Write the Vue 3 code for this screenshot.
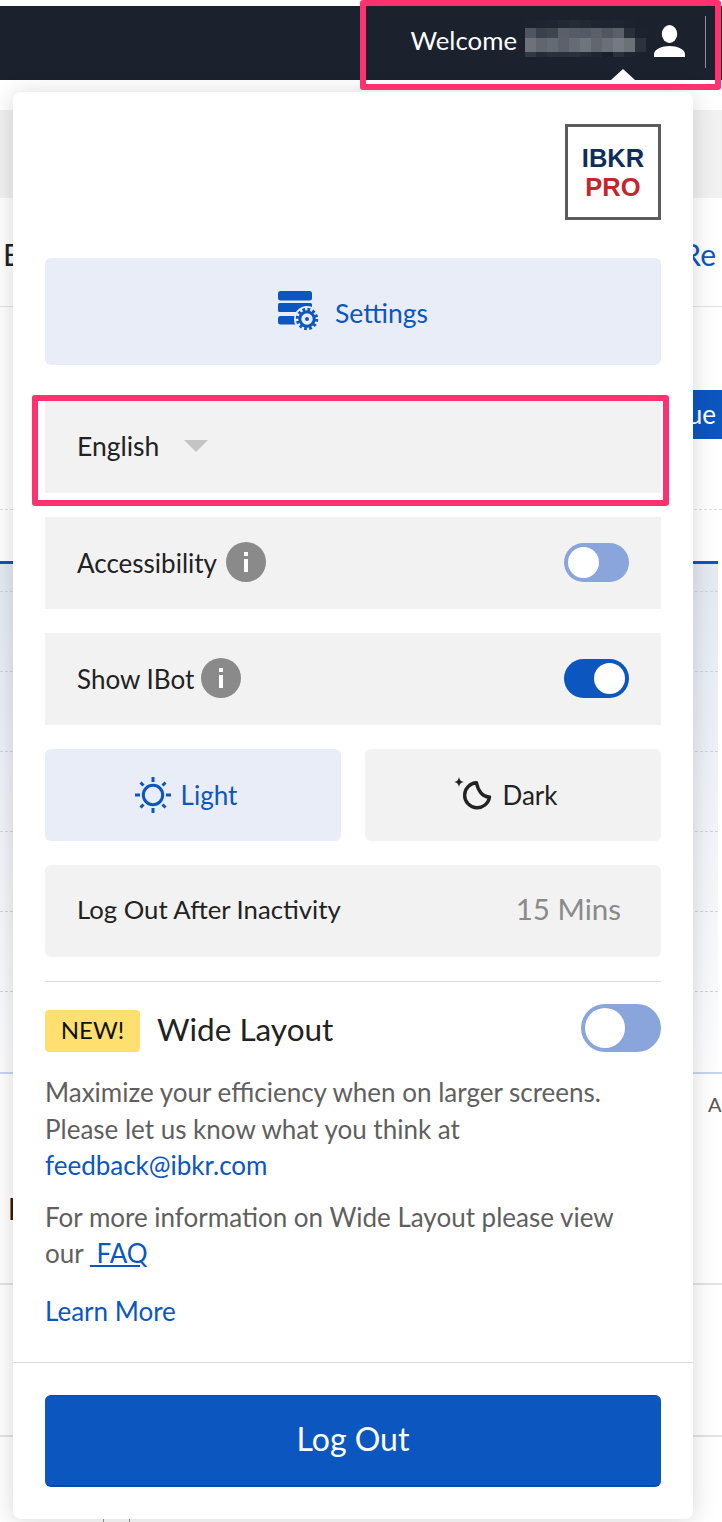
<script setup>
// pixelated name block in the header, one colour per cell
const blurRows = [
  ['#1c232e', '#1e2530', '#20262f', '#232932', '#262c35', '#232932', '#20262f', '#1e2530', '#20262f', '#1c232e', '#1b222d'],
  ['#50565f', '#3b414b', '#3f454e', '#5a5f69', '#565c66', '#545a63', '#5a5f68', '#51565f', '#5a5f69', '#2a303a', '#1c232e'],
  ['#6d727a', '#60656e', '#656a73', '#5c616b', '#666b74', '#70757d', '#62676f', '#6b7078', '#757a82', '#6c7178', '#2d333d'],
  ['#333943', '#272d37', '#2b313b', '#2a303a', '#2c323c', '#262c36', '#1f2631', '#181f2a', '#2b313b', '#1e2530', '#1b222d'],
]
const rowHeights = '8px 10px 14px 5px'
</script>

<template>
  <div class="page">
    <!-- page behind the menu -->
    <header class="topbar">
      <span class="welcome">Welcome</span>
      <div class="blur" :style="{ gridTemplateRows: rowHeights }">
        <template v-for="(row, r) in blurRows" :key="r">
          <i v-for="(c, i) in row" :key="i" :style="{ background: c }"></i>
        </template>
      </div>
      <svg class="person" width="31" height="32" viewBox="0 0 31 32">
        <ellipse cx="15.5" cy="9" rx="7.7" ry="9" fill="#fff" />
        <path d="M0 32v-2.500C0 24 8 21 15.500 21S31 24 31 29.500V32z" fill="#fff" />
      </svg>
      <div class="bar-divider"></div>
      <div class="nub"></div>
    </header>
    <div class="bg-gap"></div>
    <div class="bg-strip"></div>
    <div class="bg-title">
      <span class="bg-e">E</span>
      <span class="bg-re">Re</span>
    </div>
    <div class="bg-action">
      <div class="bg-btn"><span>ue</span></div>
    </div>
    <div class="bg-table">
      <div v-for="n in 7" :key="n" class="bg-cell"></div>
    </div>
    <div class="bg-row">
      <span class="bg-a">A</span>
      <span class="bg-i">I</span>
    </div>
    <div class="bg-row-last"></div>
    <div class="bg-ticks"><i></i><i></i></div>

    <!-- user menu -->
    <div class="menu">
      <div class="logo-wrap">
        <div class="logo">
          <span class="logo-top">IBKR</span>
          <span class="logo-bottom">PRO</span>
        </div>
      </div>

      <div class="settings">
        <svg width="42" height="42" viewBox="0 0 42 42">
          <rect x="0" y="0" width="34" height="9.500" rx="2.500" fill="#0c56bf" />
          <rect x="0" y="12" width="34" height="9" rx="1.500" fill="#0c56bf" />
          <rect x="0" y="25" width="34" height="8.500" rx="2.500" fill="#0c56bf" />
          <circle cx="29" cy="28" r="13" fill="#e9edf8" />
          <circle cx="29" cy="28" r="7.200" fill="none" stroke="#0c56bf" stroke-width="3" />
          <circle cx="29" cy="28" r="9.700" fill="none" stroke="#0c56bf" stroke-width="3" stroke-dasharray="2.700 2.400" />
          <circle cx="29" cy="28" r="2" fill="#0c56bf" />
        </svg>
        <span>Settings</span>
      </div>

      <div class="row language">
        <span>English</span>
        <i class="caret"></i>
      </div>

      <div class="row">
        <span class="label">Accessibility</span>
        <span class="info"><b></b><em></em></span>
        <span class="toggle"><i></i></span>
      </div>

      <div class="row">
        <span class="label">Show IBot</span>
        <span class="info tight"><b></b><em></em></span>
        <span class="toggle on"><i></i></span>
      </div>

      <div class="themes">
        <div class="theme active">
          <svg width="36" height="36" viewBox="0 0 36 36" fill="none" stroke="#0c56bf" stroke-width="3">
            <circle cx="18" cy="18" r="9.700" />
            <path d="M18 0v5M18 31v5M0 18h5M31 18h5M5.500 5.500l3 3M27.500 27.500l3 3M30.500 5.500l-3 3M8.500 27.500l-3 3" />
          </svg>
          <span>Light</span>
        </div>
        <div class="theme">
          <svg width="38" height="36" viewBox="0 0 38 36">
            <path d="M5 0C5.600 3.200 6.800 4.400 10 5 6.800 5.600 5.600 6.800 5 10 4.400 6.800 3.200 5.600 0 5 3.200 4.400 4.400 3.200 5 0z" fill="#222" />
            <path d="M22.500 5.800A12.500 12.500 0 1 0 35.500 20C29 20.500 24 14 22.500 5.800z" fill="none" stroke="#222" stroke-width="3.400" stroke-linejoin="round" />
          </svg>
          <span>Dark</span>
        </div>
      </div>

      <div class="row inactivity">
        <span class="inactivity-label">Log Out After Inactivity</span>
        <span class="mins">15 Mins</span>
      </div>

      <div class="wide">
        <div class="wide-head">
          <span class="badge">NEW!</span>
          <span class="wide-title">Wide Layout</span>
          <span class="toggle big"><i></i></span>
        </div>
        <p class="copy first">
          Maximize your efficiency when on larger screens.<br />
          Please let us know what you think at<br />
          <a>feedback@ibkr.com</a>
        </p>
        <p class="copy second">
          For more information on Wide Layout please view<br />
          our <a class="faq">&nbsp;FAQ</a>
        </p>
        <a class="learn">Learn More</a>
      </div>

      <div class="footer">
        <button class="logout">Log Out</button>
      </div>
    </div>

    <!-- annotation frames -->
    <div class="frame frame-top"></div>
    <div class="frame frame-lang"></div>
  </div>
</template>

<style scoped>
.page {
  position: relative;
  width: 722px;
  height: 1522px;
  overflow: hidden;
  background: #fff;
  font-family: "Lato", "Noto Sans", sans-serif;
  color: #222;
}

/* background */
.topbar {
  position: relative;
  height: 74px;
  margin-top: 6px;
  display: flex;
  align-items: center;
  justify-content: flex-end;
  background: #1b222d;
  color: #fff;
  padding: 0 16px 6px 0;
  box-sizing: border-box;
}
.welcome {
  font-size: 25.8px;
  margin-right: 8px;
}
.blur {
  display: grid;
  grid-template-columns: repeat(11, 11px);
  margin-right: 8px;
  margin-bottom: 3px;
}
.person {
  margin-right: 20px;
  margin-top: 2px;
}
.bar-divider {
  width: 1px;
  height: 52px;
  margin-top: 4px;
  background: #8a8f96;
}
.nub {
  position: absolute;
  left: 611px;
  bottom: 0;
  width: 0;
  height: 0;
  border-left: 12px solid transparent;
  border-right: 12px solid transparent;
  border-bottom: 11px solid #fff;
}
.bg-gap {
  height: 30px;
}
.bg-strip {
  height: 88px;
  background: #f1f1f1;
}
.bg-title {
  height: 109px;
  display: flex;
  justify-content: space-between;
  align-items: center;
  box-sizing: border-box;
  border-bottom: 1px solid #e3e3e3;
  font-size: 30px;
  padding: 3px 6px 0 3px;
}
.bg-re {
  color: #0c56bf;
}
.bg-action {
  height: 203px;
  display: flex;
  justify-content: flex-end;
  padding-top: 83px;
  box-sizing: border-box;
  border-bottom: 1px dashed #ddd;
}
.bg-btn {
  height: 49px;
  width: 29px;
  display: flex;
  justify-content: flex-end;
  background: #0c56bf;
  color: #fff;
  font-size: 26px;
  line-height: 49px;
  padding-right: 6px;
  box-sizing: border-box;
}
.bg-table {
  margin: 51px 4px 0 0;
  border-top: 3px solid #0c56bf;
  background: linear-gradient(#e4e9f2, #fdfdfe);
}
.bg-cell {
  height: 80px;
  box-sizing: border-box;
  border-bottom: 1px dashed #cfd3dc;
}
.bg-cell:first-child {
  height: 28px;
}
.bg-cell:last-child {
  border-bottom: 0;
}
.bg-row {
  box-sizing: border-box;
  border-top: 2px solid #c6d5ee;
  height: 211px;
  position: relative;
}
.bg-a {
  position: absolute;
  left: 708px;
  top: 18px;
  font-size: 20px;
  color: #555;
}
.bg-i {
  position: absolute;
  left: 8px;
  top: 116px;
  font-size: 30px;
  font-weight: 700;
}
.bg-row-last {
  border-top: 2px solid #e3e3e3;
  height: 150px;
}
.bg-ticks {
  border-top: 2px solid #e3e3e3;
  height: 84px;
  position: relative;
}
.bg-ticks i {
  position: absolute;
  top: 81px;
  width: 1px;
  height: 4px;
  background: #999;
  left: 103px;
}
.bg-ticks i + i {
  left: 129px;
}

/* menu */
.menu {
  position: absolute;
  left: 13px;
  top: 92px;
  width: 680px;
  height: 1427px;
  background: #fff;
  border-radius: 8px;
  box-shadow: 0 2px 24px rgba(0, 0, 0, 0.16);
  padding: 32px 32px 0;
  box-sizing: border-box;
}
.logo-wrap {
  display: flex;
  justify-content: flex-end;
}
.logo {
  width: 96px;
  height: 96px;
  border: 3px solid #5c5c5c;
  box-sizing: border-box;
  display: flex;
  flex-direction: column;
  align-items: center;
  justify-content: center;
  font-family: "Liberation Sans", sans-serif;
  font-weight: 700;
  font-size: 25.5px;
  line-height: 29px;
  padding-top: 1px;
}
.logo-top {
  color: #0d2d5e;
}
.logo-bottom {
  color: #c4262e;
}
.settings {
  margin-top: 38px;
  height: 107px;
  background: #e9edf8;
  border-radius: 6px;
  display: flex;
  align-items: center;
  justify-content: center;
  gap: 15px;
  color: #0c56bf;
  font-size: 26.5px;
}
.settings span {
  margin-top: 2px;
}
.row {
  margin-top: 24px;
  height: 92px;
  background: #f2f2f2;
  display: flex;
  align-items: center;
  padding: 0 32px 2px 32px;
  font-size: 26px;
  box-sizing: border-box;
}
.language {
  margin-top: 36px;
  font-size: 26.5px;
}
.label {
  margin-top: 2px;
}
.caret {
  margin-left: 25px;
  width: 0;
  height: 0;
  border-left: 12px solid transparent;
  border-right: 12px solid transparent;
  border-top: 12px solid #c4c4c4;
}
.info {
  position: relative;
  display: block;
  width: 40px;
  height: 40px;
  margin-left: 9px;
  border-radius: 50%;
  background: #8a8a8a;
}
.info.tight {
  margin-left: 7px;
}
.info b,
.info em {
  position: absolute;
  left: 18px;
  width: 4px;
  background: #fff;
}
.info b {
  top: 10px;
  height: 4px;
}
.info em {
  top: 17px;
  height: 13px;
}
.toggle {
  margin-left: auto;
  display: block;
  width: 65px;
  height: 39px;
  border-radius: 20px;
  background: #8aa5dc;
  padding: 4px;
  box-sizing: border-box;
}
.toggle i {
  display: block;
  width: 31px;
  height: 31px;
  border-radius: 50%;
  background: #fff;
}
.toggle.on {
  background: #0c56bf;
}
.toggle.on i {
  margin-left: 26px;
}
.toggle.big {
  width: 80px;
  height: 48px;
  border-radius: 24px;
}
.toggle.big i {
  width: 40px;
  height: 40px;
}
.themes {
  margin-top: 24px;
  display: grid;
  grid-template-columns: 296px 296px;
  gap: 24px;
}
.theme {
  height: 92px;
  background: #f2f2f2;
  border-radius: 6px;
  display: flex;
  align-items: center;
  justify-content: center;
  gap: 10px;
  font-size: 26px;
  padding: 0 14px 0 0;
  box-sizing: border-box;
}
.theme.active {
  background: #e9edf8;
  color: #0c56bf;
}
.inactivity {
  justify-content: space-between;
  padding: 0 40px 5px 32px;
  border-radius: 6px;
}
.inactivity-label {
  font-size: 25.7px;
}
.mins {
  color: #8a8a8a;
  font-size: 29.5px;
}
.wide {
  margin-top: 24px;
  border-top: 1px solid #ddd;
}
.wide-head {
  margin-top: 22px;
  display: flex;
  align-items: flex-start;
}
.badge {
  margin-top: 6px;
  width: 95px;
  height: 42px;
  line-height: 40px;
  text-align: center;
  background: #ffdf70;
  border-radius: 4px;
  font-size: 24px;
  color: #111;
}
.wide-title {
  margin-left: 17px;
  font-size: 31.5px;
  line-height: 50px;
}
.copy {
  margin: 0;
  font-size: 26px;
  line-height: 36.500px;
  color: #5f5f5f;
}
.copy a,
.learn {
  color: #0c56bf;
}
.first {
  margin-top: 20px;
}
.second {
  margin-top: 15px;
}
.faq {
  text-decoration: underline;
}
.learn {
  display: block;
  margin-top: 21px;
  font-size: 26px;
  line-height: 36px;
}
.footer {
  position: absolute;
  left: 0;
  right: 0;
  top: 1270px;
  border-top: 1px solid #ddd;
  padding: 32px 32px 0;
}
.logout {
  display: block;
  width: 100%;
  height: 92px;
  border: 0;
  border-top: 1px solid #0a49a6;
  border-bottom: 2px solid #0a49a6;
  border-radius: 6px;
  background: #0c56bf;
  color: #fff;
  font-family: inherit;
  font-size: 32px;
  padding: 0 0 4px;
}

/* annotation frames */
.frame {
  position: absolute;
  border: 6px solid #ff3270;
  border-radius: 3px;
  box-sizing: border-box;
}
.frame-top {
  left: 360px;
  top: 0;
  width: 361px;
  height: 90px;
}
.frame-lang {
  left: 32px;
  top: 395px;
  width: 637px;
  height: 111px;
}
</style>
